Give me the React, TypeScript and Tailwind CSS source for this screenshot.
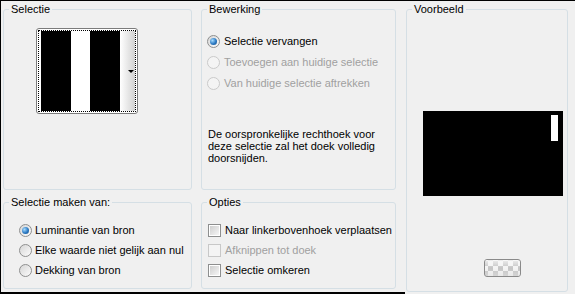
import type { ReactNode } from "react";

function Group({
  label,
  className,
  children,
}: {
  label: string;
  className?: string;
  children?: ReactNode;
}) {
  return (
    <fieldset
      className={`rounded-[3px] border border-[#d5dfe5] ${className ?? ""}`}
    >
      <legend className="ml-[5px] px-[2px] leading-[13px]">{label}</legend>
      {children}
    </fieldset>
  );
}

function Radio({
  checked,
  disabled,
}: {
  checked?: boolean;
  disabled?: boolean;
}) {
  return (
    <span
      className={
        disabled
          ? "flex h-[13px] w-[13px] shrink-0 items-center justify-center rounded-full border border-[#cacaca] bg-[#f4f4f4]"
          : "flex h-[13px] w-[13px] shrink-0 items-center justify-center rounded-full border border-[#8e8f8f] bg-gradient-to-br from-[#d6d6d6] to-[#fcfcfc]"
      }
    >
      {checked ? (
        <span className="h-[7px] w-[7px] rounded-full bg-[radial-gradient(circle_at_35%_35%,#a6dcff,#2a78c2_55%,#174f86)]" />
      ) : null}
    </span>
  );
}

function Check({ disabled }: { disabled?: boolean }) {
  return (
    <span
      className={
        disabled
          ? "flex h-[13px] w-[13px] shrink-0 border border-[#c8c8c8] bg-[#f4f4f4]"
          : "flex h-[13px] w-[13px] shrink-0 border border-[#8e8f8f] bg-white p-[1px]"
      }
    >
      {disabled ? null : (
        <span className="flex-1 bg-gradient-to-br from-[#cfcfcf] to-[#f6f6f6]" />
      )}
    </span>
  );
}

function OptionRow({
  control,
  text,
  disabled,
  className,
}: {
  control: ReactNode;
  text: string;
  disabled?: boolean;
  className?: string;
}) {
  return (
    <div
      className={`flex items-center ${className ?? ""} ${
        disabled ? "text-[#a0a0a0]" : "text-black"
      }`}
    >
      {control}
      <span className="whitespace-nowrap">{text}</span>
    </div>
  );
}

function Picker() {
  return (
    <div className="ml-[32px] mt-[12px] h-[86px] w-[102px] rounded-[3px] border border-[#7b7b7b] bg-white p-[1px]">
      <div className="flex h-full border border-dotted border-black pl-[2px]">
        <div className="w-[30px] bg-black" />
        <div className="w-[19px] bg-white" />
        <div className="w-[30px] bg-black" />
        <div className="flex flex-1 items-center justify-end bg-gradient-to-r from-white to-[#d2d2d2] pr-[1px]">
          <span className="h-0 w-0 border-x-[3px] border-t-[3px] border-x-transparent border-t-black" />
        </div>
      </div>
    </div>
  );
}

export default function App() {
  return (
    <div className="flex h-[294px] w-[575px] overflow-hidden border-l border-t border-black bg-[#f0f0f0] font-['Liberation_Sans',Arial,sans-serif] text-[11px] text-black">
      <div className="flex h-full w-[404px] flex-col border-b-2 border-black pb-[3px] pl-[2px] pt-[2px]">
        <div className="flex flex-1 gap-[9px]">
          <div className="flex w-[189px] flex-col gap-[6px]">
            <Group label="Selectie" className="h-[187px]">
              <Picker />
            </Group>
            <Group label="Selectie maken van:" className="flex-1">
              <div className="mt-[11px] flex flex-col pl-[15px]">
                <OptionRow
                  className="h-[20px] gap-[3px]"
                  control={<Radio checked />}
                  text="Luminantie van bron"
                />
                <OptionRow
                  className="h-[20px] gap-[3px]"
                  control={<Radio />}
                  text="Elke waarde niet gelijk aan nul"
                />
                <OptionRow
                  className="h-[20px] gap-[3px]"
                  control={<Radio />}
                  text="Dekking van bron"
                />
              </div>
            </Group>
          </div>
          <div className="flex w-[195px] flex-col gap-[6px]">
            <Group label="Bewerking" className="h-[187px]">
              <div className="mt-[15px] flex flex-col pl-[5px]">
                <OptionRow
                  className="h-[21px] gap-[4px]"
                  control={<Radio checked />}
                  text="Selectie vervangen"
                />
                <OptionRow
                  className="h-[21px] gap-[4px]"
                  control={<Radio disabled />}
                  text="Toevoegen aan huidige selectie"
                  disabled
                />
                <OptionRow
                  className="h-[21px] gap-[4px]"
                  control={<Radio disabled />}
                  text="Van huidige selectie aftrekken"
                  disabled
                />
              </div>
              <p className="mt-[34px] pl-[6px] leading-[12px]">
                De oorspronkelijke rechthoek voor
                <br />
                deze selectie zal het doek volledig
                <br />
                doorsnijden.
              </p>
            </Group>
            <Group label="Opties" className="flex-1">
              <div className="mt-[11px] flex flex-col pl-[6px]">
                <OptionRow
                  className="h-[20px] gap-[4px]"
                  control={<Check />}
                  text="Naar linkerbovenhoek verplaatsen"
                />
                <OptionRow
                  className="h-[20px] gap-[4px]"
                  control={<Check disabled />}
                  text="Afknippen tot doek"
                  disabled
                />
                <OptionRow
                  className="h-[20px] gap-[4px]"
                  control={<Check />}
                  text="Selectie omkeren"
                />
              </div>
            </Group>
          </div>
        </div>
      </div>
      <div className="ml-[1px] pt-[2px]">
        <Group label="Voorbeeld" className="h-[289px] w-[162px]">
          <div className="ml-[16px] mt-[95px] flex h-[85px] w-[140px] justify-end bg-black pr-[5px] pt-[4px]">
            <div className="h-[26px] w-[7px] bg-white" />
          </div>
          <div className="ml-[77px] mt-[63px] h-[18px] w-[37px] overflow-hidden rounded-[3px] border border-[#8a8a8a] bg-[conic-gradient(#c4c4c4_25%,#f4f4f4_0_50%,#c4c4c4_0_75%,#f4f4f4_0)] bg-[length:10px_10px] bg-[position:3px_1px]">
            <div className="h-full w-full bg-gradient-to-b from-[#f8f8f8]/80 via-transparent to-[#e0e0e0]/60" />
          </div>
        </Group>
      </div>
    </div>
  );
}
